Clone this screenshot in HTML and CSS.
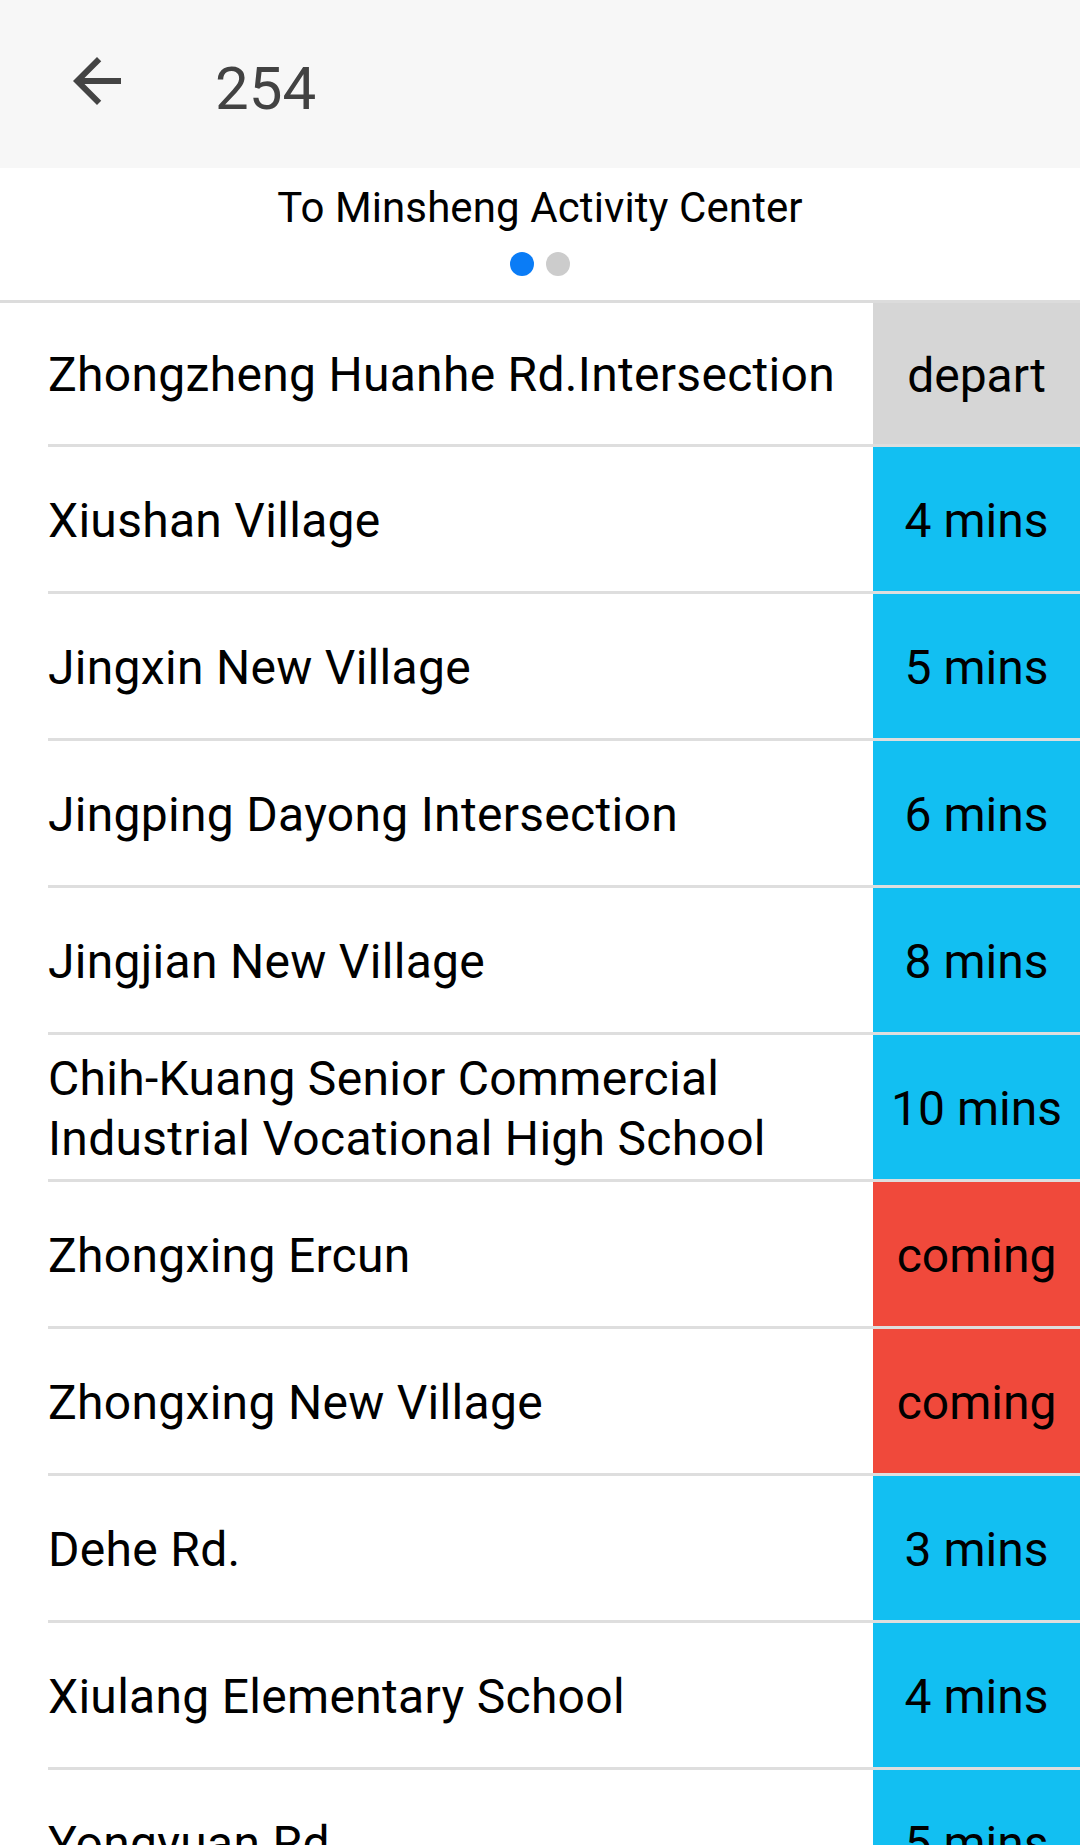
FILE: index.html
```html
<!DOCTYPE html>
<html lang="en">
<head>
    <meta charset="UTF-8">
    <title>254</title>
    <link rel="stylesheet" href="styles.css">
</head>
<body>
<div class="bar">
    <svg class="back" viewBox="0 0 24 24"><path d="M20 11H7.83l5.59-5.59L12 4l-8 8 8 8 1.41-1.41L7.83 13H20v-2z"/></svg>
    <span class="title">254</span>
</div>
<div class="dir">
    <div class="dir-name">To Minsheng Activity Center</div>
    <div class="dots"><span class="dot on"></span><span class="dot"></span></div>
</div>
<div class="list">
    <div class="stop"><div class="name">Zhongzheng Huanhe Rd.Intersection</div><div class="eta gone">depart</div></div>
    <div class="stop"><div class="name">Xiushan Village</div><div class="eta">4 mins</div></div>
    <div class="stop"><div class="name">Jingxin New Village</div><div class="eta">5 mins</div></div>
    <div class="stop"><div class="name">Jingping Dayong Intersection</div><div class="eta">6 mins</div></div>
    <div class="stop"><div class="name">Jingjian New Village</div><div class="eta">8 mins</div></div>
    <div class="stop"><div class="name">Chih-Kuang Senior Commercial Industrial Vocational High School</div><div class="eta">10 mins</div></div>
    <div class="stop"><div class="name">Zhongxing Ercun</div><div class="eta near">coming</div></div>
    <div class="stop"><div class="name">Zhongxing New Village</div><div class="eta near">coming</div></div>
    <div class="stop"><div class="name">Dehe Rd.</div><div class="eta">3 mins</div></div>
    <div class="stop"><div class="name">Xiulang Elementary School</div><div class="eta">4 mins</div></div>
    <div class="stop"><div class="name">Yongyuan Rd.</div><div class="eta">5 mins</div></div>
</div>
</body>
</html>
```
FILE: styles.css
```css
*{
    margin: 0;
    padding: 0;
    box-sizing: border-box;
}
html,body {
    width: 100%;
    background-color: #fff;
    font-family: Roboto, "Noto Sans", sans-serif;
    color: #000;
}
.bar {
    height: 168px;
    background-color: #f7f7f7;
    display: flex;
    align-items: flex-start;
    padding: 45px 0 0 61px;
}
.back {
    width: 72px;
    height: 72px;
    fill: #444;
    flex-shrink: 0;
}
.title {
    margin: 14px 0 0 82px;
    font-size: 60px;
    line-height: 60px;
    color: #424242;
}
.dir {
    height: 135px;
    border-bottom: 3px solid #dcdcdc;
    padding-top: 19px;
    text-align: center;
}
.dir-name {
    font-size: 42px;
    line-height: 42px;
    letter-spacing: 0.1px;
}
.dots {
    display: flex;
    justify-content: center;
    gap: 12px;
    margin-top: 23px;
}
.dot {
    width: 24px;
    height: 24px;
    border-radius: 50%;
    background-color: #cccccc;
}
.dot.on {
    background-color: #0a7cf6;
}
.stop {
    margin-left: 48px;
    height: 147px;
    border-bottom: 3px solid #dedede;
    display: flex;
}
.stop:first-child {
    height: 144px;
}
.name {
    flex: 1;
    align-self: center;
    font-size: 48px;
    line-height: 60px;
    letter-spacing: 0.3px;
    padding: 3px 20px 0 0;
}
.eta {
    width: 207px;
    flex-shrink: 0;
    display: flex;
    align-items: center;
    justify-content: center;
    padding-top: 3px;
    font-size: 48px;
    background-color: #12bff2;
}
.eta.gone {
    background-color: #d6d6d6;
}
.eta.near {
    background-color: #f0493b;
}
```
